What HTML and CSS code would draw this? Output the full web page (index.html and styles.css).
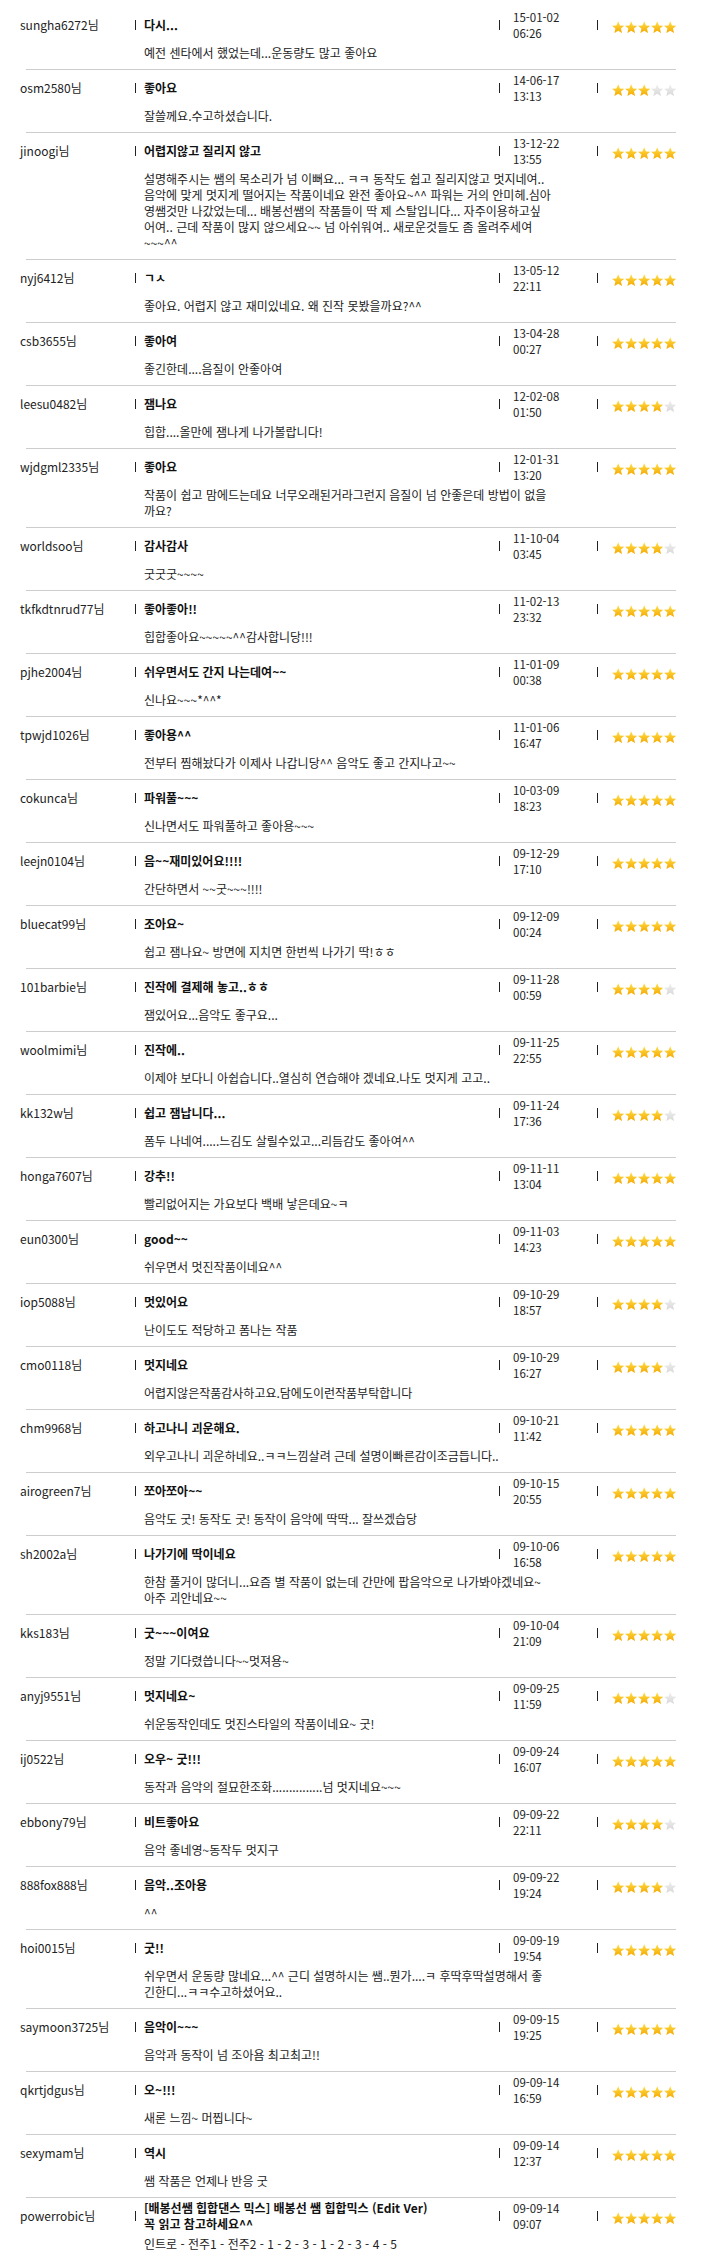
FILE: index.html
```html
<!DOCTYPE html>
<html lang="ko">
<head>
<meta charset="utf-8">
<title>수강후기</title>
<link rel="stylesheet" href="styles.css">
</head>
<body>
<svg class="defs" width="0" height="0" aria-hidden="true">
  <defs>
    <linearGradient id="gold" x1="0" y1="0" x2="0" y2="1">
      <stop offset="0" stop-color="#ffe04a"/>
      <stop offset="1" stop-color="#f5a800"/>
    </linearGradient>
    <linearGradient id="grey" x1="0" y1="0" x2="0" y2="1">
      <stop offset="0" stop-color="#f0f0f0"/>
      <stop offset="1" stop-color="#d8d8d8"/>
    </linearGradient>
    <symbol id="star" viewBox="0 0 12 12">
      <polygon points="6,0.2 7.7,4.2 12,4.5 8.7,7.3 9.7,11.6 6,9.3 2.3,11.6 3.3,7.3 0,4.5 4.3,4.2"/>
    </symbol>
  </defs>
</svg>

<div class="list">

<div class="row">
  <div class="head"><span class="name">sungha6272님</span><span class="bar"></span><span class="title">다시...</span><span class="bar"></span><span class="date">15-01-02<br>06:26</span><span class="bar"></span><span class="stars r5"><svg><use href="#star"/></svg><svg><use href="#star"/></svg><svg><use href="#star"/></svg><svg><use href="#star"/></svg><svg><use href="#star"/></svg></span></div>
  <div class="comment">예전 센타에서 했었는데...운동량도 많고 좋아요</div>
</div>

<div class="row">
  <div class="head"><span class="name">osm2580님</span><span class="bar"></span><span class="title">좋아요</span><span class="bar"></span><span class="date">14-06-17<br>13:13</span><span class="bar"></span><span class="stars r3"><svg><use href="#star"/></svg><svg><use href="#star"/></svg><svg><use href="#star"/></svg><svg><use href="#star"/></svg><svg><use href="#star"/></svg></span></div>
  <div class="comment">잘쓸께요.수고하셨습니다.</div>
</div>

<div class="row">
  <div class="head"><span class="name">jinoogi님</span><span class="bar"></span><span class="title">어렵지않고 질리지 않고</span><span class="bar"></span><span class="date">13-12-22<br>13:55</span><span class="bar"></span><span class="stars r5"><svg><use href="#star"/></svg><svg><use href="#star"/></svg><svg><use href="#star"/></svg><svg><use href="#star"/></svg><svg><use href="#star"/></svg></span></div>
  <div class="comment">설명해주시는 쌤의 목소리가 넘 이뻐요... ㅋㅋ 동작도 쉽고 질리지않고 멋지네여..<br>음악에 맞게 멋지게 떨어지는 작품이네요 완전 좋아요~^^ 파워는 거의 안미헤.심아<br>영쌤것만 나갔었는데... 배봉선쌤의 작품들이 딱 제 스탈입니다... 자주이용하고싶<br>어여.. 근데 작품이 많지 않으세요~~ 넘 아쉬워여.. 새로운것들도 좀 올려주세여<br>~~~^^</div>
</div>

<div class="row">
  <div class="head"><span class="name">nyj6412님</span><span class="bar"></span><span class="title">ㄱㅅ</span><span class="bar"></span><span class="date">13-05-12<br>22:11</span><span class="bar"></span><span class="stars r5"><svg><use href="#star"/></svg><svg><use href="#star"/></svg><svg><use href="#star"/></svg><svg><use href="#star"/></svg><svg><use href="#star"/></svg></span></div>
  <div class="comment">좋아요. 어렵지 않고 재미있네요. 왜 진작 못봤을까요?^^</div>
</div>

<div class="row">
  <div class="head"><span class="name">csb3655님</span><span class="bar"></span><span class="title">좋아여</span><span class="bar"></span><span class="date">13-04-28<br>00:27</span><span class="bar"></span><span class="stars r5"><svg><use href="#star"/></svg><svg><use href="#star"/></svg><svg><use href="#star"/></svg><svg><use href="#star"/></svg><svg><use href="#star"/></svg></span></div>
  <div class="comment">좋긴한데....음질이 안좋아여</div>
</div>

<div class="row">
  <div class="head"><span class="name">leesu0482님</span><span class="bar"></span><span class="title">잼나요</span><span class="bar"></span><span class="date">12-02-08<br>01:50</span><span class="bar"></span><span class="stars r4"><svg><use href="#star"/></svg><svg><use href="#star"/></svg><svg><use href="#star"/></svg><svg><use href="#star"/></svg><svg><use href="#star"/></svg></span></div>
  <div class="comment">힙합....올만에 잼나게 나가볼랍니다!</div>
</div>

<div class="row">
  <div class="head"><span class="name">wjdgml2335님</span><span class="bar"></span><span class="title">좋아요</span><span class="bar"></span><span class="date">12-01-31<br>13:20</span><span class="bar"></span><span class="stars r5"><svg><use href="#star"/></svg><svg><use href="#star"/></svg><svg><use href="#star"/></svg><svg><use href="#star"/></svg><svg><use href="#star"/></svg></span></div>
  <div class="comment">작품이 쉽고 맘에드는데요 너무오래된거라그런지 음질이 넘 안좋은데 방법이 없을<br>까요?</div>
</div>

<div class="row">
  <div class="head"><span class="name">worldsoo님</span><span class="bar"></span><span class="title">감사감사</span><span class="bar"></span><span class="date">11-10-04<br>03:45</span><span class="bar"></span><span class="stars r4"><svg><use href="#star"/></svg><svg><use href="#star"/></svg><svg><use href="#star"/></svg><svg><use href="#star"/></svg><svg><use href="#star"/></svg></span></div>
  <div class="comment">굿굿굿~~~~</div>
</div>

<div class="row">
  <div class="head"><span class="name">tkfkdtnrud77님</span><span class="bar"></span><span class="title">좋아좋아!!</span><span class="bar"></span><span class="date">11-02-13<br>23:32</span><span class="bar"></span><span class="stars r5"><svg><use href="#star"/></svg><svg><use href="#star"/></svg><svg><use href="#star"/></svg><svg><use href="#star"/></svg><svg><use href="#star"/></svg></span></div>
  <div class="comment">힙합좋아요~~~~~^^감사합니당!!!</div>
</div>

<div class="row">
  <div class="head"><span class="name">pjhe2004님</span><span class="bar"></span><span class="title">쉬우면서도 간지 나는데여~~</span><span class="bar"></span><span class="date">11-01-09<br>00:38</span><span class="bar"></span><span class="stars r5"><svg><use href="#star"/></svg><svg><use href="#star"/></svg><svg><use href="#star"/></svg><svg><use href="#star"/></svg><svg><use href="#star"/></svg></span></div>
  <div class="comment">신나요~~~*^^*</div>
</div>

<div class="row">
  <div class="head"><span class="name">tpwjd1026님</span><span class="bar"></span><span class="title">좋아용^^</span><span class="bar"></span><span class="date">11-01-06<br>16:47</span><span class="bar"></span><span class="stars r5"><svg><use href="#star"/></svg><svg><use href="#star"/></svg><svg><use href="#star"/></svg><svg><use href="#star"/></svg><svg><use href="#star"/></svg></span></div>
  <div class="comment">전부터 찜해놨다가 이제사 나갑니당^^ 음악도 좋고 간지나고~~</div>
</div>

<div class="row">
  <div class="head"><span class="name">cokunca님</span><span class="bar"></span><span class="title">파워풀~~~</span><span class="bar"></span><span class="date">10-03-09<br>18:23</span><span class="bar"></span><span class="stars r5"><svg><use href="#star"/></svg><svg><use href="#star"/></svg><svg><use href="#star"/></svg><svg><use href="#star"/></svg><svg><use href="#star"/></svg></span></div>
  <div class="comment">신나면서도 파워풀하고 좋아용~~~</div>
</div>

<div class="row">
  <div class="head"><span class="name">leejn0104님</span><span class="bar"></span><span class="title">음~~재미있어요!!!!</span><span class="bar"></span><span class="date">09-12-29<br>17:10</span><span class="bar"></span><span class="stars r5"><svg><use href="#star"/></svg><svg><use href="#star"/></svg><svg><use href="#star"/></svg><svg><use href="#star"/></svg><svg><use href="#star"/></svg></span></div>
  <div class="comment">간단하면서 ~~굿~~~!!!!</div>
</div>

<div class="row">
  <div class="head"><span class="name">bluecat99님</span><span class="bar"></span><span class="title">조아요~</span><span class="bar"></span><span class="date">09-12-09<br>00:24</span><span class="bar"></span><span class="stars r5"><svg><use href="#star"/></svg><svg><use href="#star"/></svg><svg><use href="#star"/></svg><svg><use href="#star"/></svg><svg><use href="#star"/></svg></span></div>
  <div class="comment">쉽고 잼나요~ 방면에 지치면 한번씩 나가기 딱!ㅎㅎ</div>
</div>

<div class="row">
  <div class="head"><span class="name">101barbie님</span><span class="bar"></span><span class="title">진작에 결제해 놓고..ㅎㅎ</span><span class="bar"></span><span class="date">09-11-28<br>00:59</span><span class="bar"></span><span class="stars r4"><svg><use href="#star"/></svg><svg><use href="#star"/></svg><svg><use href="#star"/></svg><svg><use href="#star"/></svg><svg><use href="#star"/></svg></span></div>
  <div class="comment">잼있어요...음악도 좋구요...</div>
</div>

<div class="row">
  <div class="head"><span class="name">woolmimi님</span><span class="bar"></span><span class="title">진작에..</span><span class="bar"></span><span class="date">09-11-25<br>22:55</span><span class="bar"></span><span class="stars r5"><svg><use href="#star"/></svg><svg><use href="#star"/></svg><svg><use href="#star"/></svg><svg><use href="#star"/></svg><svg><use href="#star"/></svg></span></div>
  <div class="comment">이제야 보다니 아쉽습니다..열심히 연습해야 겠네요.나도 멋지게 고고..</div>
</div>

<div class="row">
  <div class="head"><span class="name">kk132w님</span><span class="bar"></span><span class="title">쉽고 잼납니다...</span><span class="bar"></span><span class="date">09-11-24<br>17:36</span><span class="bar"></span><span class="stars r4"><svg><use href="#star"/></svg><svg><use href="#star"/></svg><svg><use href="#star"/></svg><svg><use href="#star"/></svg><svg><use href="#star"/></svg></span></div>
  <div class="comment">폼두 나네여.....느김도 살릴수있고...리듬감도 좋아여^^</div>
</div>

<div class="row">
  <div class="head"><span class="name">honga7607님</span><span class="bar"></span><span class="title">강추!!</span><span class="bar"></span><span class="date">09-11-11<br>13:04</span><span class="bar"></span><span class="stars r5"><svg><use href="#star"/></svg><svg><use href="#star"/></svg><svg><use href="#star"/></svg><svg><use href="#star"/></svg><svg><use href="#star"/></svg></span></div>
  <div class="comment">빨리없어지는 가요보다 백배 낳은데요~ㅋ</div>
</div>

<div class="row">
  <div class="head"><span class="name">eun0300님</span><span class="bar"></span><span class="title">good~~</span><span class="bar"></span><span class="date">09-11-03<br>14:23</span><span class="bar"></span><span class="stars r5"><svg><use href="#star"/></svg><svg><use href="#star"/></svg><svg><use href="#star"/></svg><svg><use href="#star"/></svg><svg><use href="#star"/></svg></span></div>
  <div class="comment">쉬우면서 멋진작품이네요^^</div>
</div>

<div class="row">
  <div class="head"><span class="name">iop5088님</span><span class="bar"></span><span class="title">멋있어요</span><span class="bar"></span><span class="date">09-10-29<br>18:57</span><span class="bar"></span><span class="stars r4"><svg><use href="#star"/></svg><svg><use href="#star"/></svg><svg><use href="#star"/></svg><svg><use href="#star"/></svg><svg><use href="#star"/></svg></span></div>
  <div class="comment">난이도도 적당하고 폼나는 작품</div>
</div>

<div class="row">
  <div class="head"><span class="name">cmo0118님</span><span class="bar"></span><span class="title">멋지네요</span><span class="bar"></span><span class="date">09-10-29<br>16:27</span><span class="bar"></span><span class="stars r4"><svg><use href="#star"/></svg><svg><use href="#star"/></svg><svg><use href="#star"/></svg><svg><use href="#star"/></svg><svg><use href="#star"/></svg></span></div>
  <div class="comment">어렵지않은작품감사하고요.담에도이런작품부탁합니다</div>
</div>

<div class="row">
  <div class="head"><span class="name">chm9968님</span><span class="bar"></span><span class="title">하고나니 괴운해요.</span><span class="bar"></span><span class="date">09-10-21<br>11:42</span><span class="bar"></span><span class="stars r5"><svg><use href="#star"/></svg><svg><use href="#star"/></svg><svg><use href="#star"/></svg><svg><use href="#star"/></svg><svg><use href="#star"/></svg></span></div>
  <div class="comment">외우고나니 괴운하네요..ㅋㅋ느낌살려 근데 설명이빠른감이조금듭니다..</div>
</div>

<div class="row">
  <div class="head"><span class="name">airogreen7님</span><span class="bar"></span><span class="title">쪼아쪼아~~</span><span class="bar"></span><span class="date">09-10-15<br>20:55</span><span class="bar"></span><span class="stars r5"><svg><use href="#star"/></svg><svg><use href="#star"/></svg><svg><use href="#star"/></svg><svg><use href="#star"/></svg><svg><use href="#star"/></svg></span></div>
  <div class="comment">음악도 굿! 동작도 굿! 동작이 음악에 딱딱... 잘쓰겠습당</div>
</div>

<div class="row">
  <div class="head"><span class="name">sh2002a님</span><span class="bar"></span><span class="title">나가기에 딱이네요</span><span class="bar"></span><span class="date">09-10-06<br>16:58</span><span class="bar"></span><span class="stars r5"><svg><use href="#star"/></svg><svg><use href="#star"/></svg><svg><use href="#star"/></svg><svg><use href="#star"/></svg><svg><use href="#star"/></svg></span></div>
  <div class="comment">한참 풀거이 많더니...요즘 별 작품이 없는데 간만에 팝음악으로 나가봐야겠네요~<br>아주 괴안네요~~</div>
</div>

<div class="row">
  <div class="head"><span class="name">kks183님</span><span class="bar"></span><span class="title">굿~~~이여요</span><span class="bar"></span><span class="date">09-10-04<br>21:09</span><span class="bar"></span><span class="stars r5"><svg><use href="#star"/></svg><svg><use href="#star"/></svg><svg><use href="#star"/></svg><svg><use href="#star"/></svg><svg><use href="#star"/></svg></span></div>
  <div class="comment">정말 기다렸씁니다~~멋져용~</div>
</div>

<div class="row">
  <div class="head"><span class="name">anyj9551님</span><span class="bar"></span><span class="title">멋지네요~</span><span class="bar"></span><span class="date">09-09-25<br>11:59</span><span class="bar"></span><span class="stars r4"><svg><use href="#star"/></svg><svg><use href="#star"/></svg><svg><use href="#star"/></svg><svg><use href="#star"/></svg><svg><use href="#star"/></svg></span></div>
  <div class="comment">쉬운동작인데도 멋진스타일의 작품이네요~ 굿!</div>
</div>

<div class="row">
  <div class="head"><span class="name">ij0522님</span><span class="bar"></span><span class="title">오우~ 굿!!!</span><span class="bar"></span><span class="date">09-09-24<br>16:07</span><span class="bar"></span><span class="stars r5"><svg><use href="#star"/></svg><svg><use href="#star"/></svg><svg><use href="#star"/></svg><svg><use href="#star"/></svg><svg><use href="#star"/></svg></span></div>
  <div class="comment">동작과 음악의 절묘한조화...............넘 멋지네요~~~</div>
</div>

<div class="row">
  <div class="head"><span class="name">ebbony79님</span><span class="bar"></span><span class="title">비트좋아요</span><span class="bar"></span><span class="date">09-09-22<br>22:11</span><span class="bar"></span><span class="stars r4"><svg><use href="#star"/></svg><svg><use href="#star"/></svg><svg><use href="#star"/></svg><svg><use href="#star"/></svg><svg><use href="#star"/></svg></span></div>
  <div class="comment">음악 좋네영~동작두 멋지구</div>
</div>

<div class="row">
  <div class="head"><span class="name">888fox888님</span><span class="bar"></span><span class="title">음악..조아용</span><span class="bar"></span><span class="date">09-09-22<br>19:24</span><span class="bar"></span><span class="stars r4"><svg><use href="#star"/></svg><svg><use href="#star"/></svg><svg><use href="#star"/></svg><svg><use href="#star"/></svg><svg><use href="#star"/></svg></span></div>
  <div class="comment">^^</div>
</div>

<div class="row">
  <div class="head"><span class="name">hoi0015님</span><span class="bar"></span><span class="title">굿!!</span><span class="bar"></span><span class="date">09-09-19<br>19:54</span><span class="bar"></span><span class="stars r5"><svg><use href="#star"/></svg><svg><use href="#star"/></svg><svg><use href="#star"/></svg><svg><use href="#star"/></svg><svg><use href="#star"/></svg></span></div>
  <div class="comment">쉬우면서 운동량 많네요...^^ 근디 설명하시는 쌤..뭔가....ㅋ 후딱후딱설명해서 좋<br>긴한디...ㅋㅋ수고하셨어요..</div>
</div>

<div class="row">
  <div class="head"><span class="name">saymoon3725님</span><span class="bar"></span><span class="title">음악이~~~</span><span class="bar"></span><span class="date">09-09-15<br>19:25</span><span class="bar"></span><span class="stars r5"><svg><use href="#star"/></svg><svg><use href="#star"/></svg><svg><use href="#star"/></svg><svg><use href="#star"/></svg><svg><use href="#star"/></svg></span></div>
  <div class="comment">음악과 동작이 넘 조아욤 최고최고!!</div>
</div>

<div class="row">
  <div class="head"><span class="name">qkrtjdgus님</span><span class="bar"></span><span class="title">오~!!!</span><span class="bar"></span><span class="date">09-09-14<br>16:59</span><span class="bar"></span><span class="stars r5"><svg><use href="#star"/></svg><svg><use href="#star"/></svg><svg><use href="#star"/></svg><svg><use href="#star"/></svg><svg><use href="#star"/></svg></span></div>
  <div class="comment">새론 느낌~ 머찝니다~</div>
</div>

<div class="row">
  <div class="head"><span class="name">sexymam님</span><span class="bar"></span><span class="title">역시</span><span class="bar"></span><span class="date">09-09-14<br>12:37</span><span class="bar"></span><span class="stars r5"><svg><use href="#star"/></svg><svg><use href="#star"/></svg><svg><use href="#star"/></svg><svg><use href="#star"/></svg><svg><use href="#star"/></svg></span></div>
  <div class="comment">쌤 작품은 언제나 반응 굿</div>
</div>

<div class="row">
  <div class="head"><span class="name">powerrobic님</span><span class="bar"></span><span class="title">[배봉선쌤 힙합댄스 믹스] 배봉선 쌤 힙합믹스 (Edit Ver)<br>꼭 읽고 참고하세요^^</span><span class="bar"></span><span class="date">09-09-14<br>09:07</span><span class="bar"></span><span class="stars r5"><svg><use href="#star"/></svg><svg><use href="#star"/></svg><svg><use href="#star"/></svg><svg><use href="#star"/></svg><svg><use href="#star"/></svg></span></div>
  <div class="comment">인트로 - 전주1 - 전주2 - 1 - 2 - 3 - 1 - 2 - 3 - 4 - 5</div>
</div>

</div>
</body>
</html>
```

FILE: styles.css
```css
html, body {
  margin: 0;
  padding: 0;
  background: #fff;
}

body {
  font-family: "Noto Sans CJK KR", "Noto Sans", "Liberation Sans", sans-serif;
  font-size: 12px;
  line-height: 16px;
  color: #222;
  padding-top: 7px;
}

.defs {
  display: block;
  width: 0;
  height: 0;
  overflow: hidden;
}

.list {
  width: 650px;
  margin-left: 26px;
}

.row {
  padding: 2px 0 8px;
  border-bottom: 1px solid #cdcdcd;
}

.head {
  display: flex;
  align-items: center;
  height: 32px;
}

.name {
  width: 115px;
  margin-left: -6px;
  flex: none;
  color: #222;
  white-space: nowrap;
}

.bar {
  flex: none;
  width: 1px;
  height: 10px;
  background: #222;
}

.title {
  flex: 1;
  margin-left: 8px;
  font-weight: bold;
  color: #111;
  white-space: nowrap;
}

.date {
  flex: none;
  width: 84px;
  margin-left: 13px;
  color: #222;
  font-size: 11.5px;
}

.stars {
  flex: none;
  display: flex;
  gap: 0.5px;
  margin-left: 14px;
  margin-top: 4px;
  width: 64px;
}

.stars svg {
  width: 12.5px;
  height: 12.5px;
  fill: url(#gold);
}

.r4 svg:nth-child(n+5),
.r3 svg:nth-child(n+4) {
  fill: url(#grey);
}

.comment {
  margin-top: 4px;
  padding-left: 118px;
  color: #222;
  white-space: nowrap;
}
```
